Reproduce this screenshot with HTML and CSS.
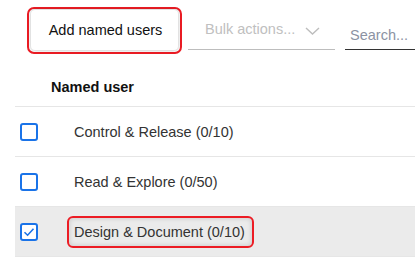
FILE: index.html
```html
<!DOCTYPE html>
<html>
<head>
<meta charset="utf-8">
<link rel="stylesheet" href="styles.css">
</head>
<body>
<div class="toolbar">
  <div class="callout callout-btn">
    <button class="btn">Add named users</button>
  </div>
  <div class="bulk">
    <span class="bulk-label">Bulk actions...</span>
    <svg class="chev" width="15" height="8" viewBox="0 0 15 8"><path d="M1 1 L7.5 7 L14 1" fill="none" stroke="#bdbdbd" stroke-width="1.4"/></svg>
  </div>
  <div class="search">
    <span class="search-ph">Search...</span>
  </div>
</div>
<div class="table">
  <div class="thead">Named user</div>
  <div class="row">
    <span class="cb"></span>
    <span class="label">Control &amp; Release (0/10)</span>
  </div>
  <div class="row">
    <span class="cb"></span>
    <span class="label">Read &amp; Explore (0/50)</span>
  </div>
  <div class="row selected">
    <span class="cb checked"><svg width="14" height="14" viewBox="0 0 14 14"><path d="M2.5 7.2 L5.6 10.2 L11.5 3.8" fill="none" stroke="#1a73e8" stroke-width="1.6"/></svg></span>
    <span class="callout callout-label"><span class="label">Design &amp; Document (0/10)</span></span>
  </div>
</div>
</body>
</html>
```

FILE: styles.css
```css
html, body {
  margin: 0;
  padding: 0;
  background: #fff;
  font-family: "Liberation Sans", Arial, sans-serif;
  color: #222;
  overflow: hidden;
}
.toolbar {
  height: 60px;
  display: flex;
  align-items: flex-start;
  padding-left: 27px;
  box-sizing: border-box;
}
.callout {
  border: 2px solid #ec1c24;
  border-radius: 7px;
  box-sizing: border-box;
}
.callout-btn {
  margin-top: 7px;
  width: 155px;
  height: 47px;
  padding: 1px 2px 2px 2px;
}
.btn {
  width: 100%;
  height: 100%;
  border: none;
  background: #fff;
  border-radius: 4px;
  box-shadow: 0 0 3px 1px rgba(0,0,0,0.18);
  font-family: "Liberation Sans", Arial, sans-serif;
  font-size: 14.5px;
  color: #111;
  padding: 0 0 1px 2px;
}
.bulk {
  margin-left: 6px;
  margin-top: 18px;
  width: 147px;
  height: 32px;
  border-bottom: 1px solid #bdbdbd;
  box-sizing: border-box;
  display: flex;
  align-items: flex-start;
  padding-left: 17px;
  padding-top: 3px;
}
.bulk-label {
  font-size: 14.5px;
  color: #c0c0c0;
}
.chev {
  margin-left: 10px;
  margin-top: 6px;
}
.search {
  margin-left: 10px;
  margin-top: 26px;
  flex: 1;
  height: 24px;
  border-bottom: 1px solid #333;
  box-sizing: border-box;
  padding-left: 5px;
}
.search-ph {
  font-size: 14.5px;
  color: #8c93a3;
}
.table {
  margin-left: 15px;
}
.thead {
  height: 47px;
  border-bottom: 1px solid #e6e6e6;
  box-sizing: border-box;
  padding-left: 36px;
  display: flex;
  align-items: center;
  font-weight: bold;
  font-size: 14.5px;
  color: #111;
  padding-top: 7px;
}
.row {
  height: 50px;
  border-bottom: 1px solid #e6e6e6;
  box-sizing: border-box;
  display: flex;
  align-items: center;
  padding-left: 5px;
}
.row.selected {
  background: #ebebeb;
}
.cb {
  width: 18px;
  height: 18px;
  border: 2px solid #1a73e8;
  border-radius: 3px;
  box-sizing: border-box;
  background: #fff;
  display: flex;
  align-items: center;
  justify-content: center;
  margin-right: 36px;
  flex: none;
}
.label {
  font-size: 14.5px;
  color: #333;
}
.callout-label {
  margin-left: -7px;
  height: 32px;
  padding: 0 7px 0 5px;
  display: flex;
  align-items: center;
  border-radius: 6px;
  box-shadow: inset 0 0 4px 1px rgba(0,0,0,0.12);
}
```
